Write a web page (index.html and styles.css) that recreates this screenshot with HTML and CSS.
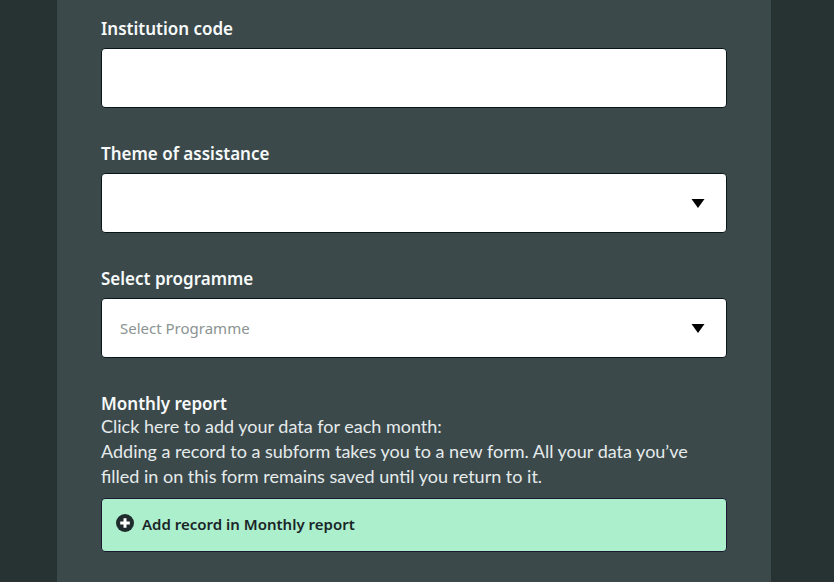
FILE: index.html
```html
<!DOCTYPE html>
<html lang="en">
<head>
  <meta charset="UTF-8">
  <meta name="viewport" content="width=device-width, initial-scale=1.0">
  <link rel="stylesheet" href="styles.css">
  <title>Monthly report</title>
</head>
<body class="page">
  <main class="panel">
    <form class="form">
      <div class="field">
        <label class="field__label" for="institution-code">Institution code</label>
        <input class="field__control" type="text" id="institution-code">
      </div>

      <div class="field">
        <label class="field__label" for="theme">Theme of assistance</label>
        <div class="select">
          <select class="field__control select__control" id="theme">
            <option value=""></option>
          </select>
          <svg class="select__arrow" viewBox="0 0 14 9" aria-hidden="true"><path d="M.5 0h13L7 9z"/></svg>
        </div>
      </div>

      <div class="field">
        <label class="field__label" for="programme">Select programme</label>
        <div class="select">
          <select class="field__control select__control" id="programme">
            <option value="">Select Programme</option>
          </select>
          <svg class="select__arrow" viewBox="0 0 14 9" aria-hidden="true"><path d="M.5 0h13L7 9z"/></svg>
        </div>
      </div>

      <section class="subform">
        <h2 class="subform__title">Monthly report</h2>
        <p class="subform__text">Click here to add your data for each month:</p>
        <p class="subform__text">Adding a record to a subform takes you to a new form. All your data you’ve filled in on this form remains saved until you return to it.</p>
        <button class="button" type="button">
          <svg class="button__icon" viewBox="0 0 18 18" aria-hidden="true">
            <circle cx="9" cy="9" r="9" fill="#1f2b2d"/>
            <path d="M9 4.2v9.6M4.2 9h9.6" stroke="#fff" stroke-width="3"/>
          </svg>
          Add record in Monthly report
        </button>
      </section>
    </form>
  </main>
</body>
</html>
```

FILE: styles.css
```css
* {
  box-sizing: border-box;
}

.page {
  margin: 0;
  background: #273332;
  color: #e6ebeb;
  font-family: "Noto Sans", "Open Sans", sans-serif;
  font-size: 17px;
}

.panel {
  min-height: 100vh;
  margin: 0 63px 0 57px;
  padding: 19px 44px 30px;
  background: #3b494b;
}

.form {
  display: flex;
  flex-direction: column;
  gap: 36px;
}

.field {
  display: flex;
  flex-direction: column;
  gap: 9px;
}

.field__label,
.subform__title {
  margin: 0;
  color: #f7fafa;
  font-size: 17px;
  font-weight: 600;
  line-height: 20px;
}

.field__control {
  display: block;
  width: 100%;
  height: 60px;
  padding: 0 18px;
  border: 1px solid #071719;
  border-radius: 4px;
  background: #fff;
  color: #8b9492;
  font-family: inherit;
  font-size: 15px;
}

.select {
  position: relative;
}

.select__control {
  appearance: none;
}

.select__arrow {
  position: absolute;
  top: 26px;
  right: 22px;
  width: 14px;
  height: 9px;
  pointer-events: none;
}

.subform__text {
  margin: 0;
  font-family: Lato, "Noto Sans", sans-serif;
  font-size: 18px;
  line-height: 25px;
}

.button {
  display: flex;
  align-items: center;
  gap: 8px;
  width: 100%;
  height: 54px;
  margin-top: 9px;
  padding: 0 15px 2px 14px;
  border: 1px solid #1b1730;
  border-radius: 4px;
  background: #abefcd;
  color: #1a2527;
  font-family: inherit;
  font-size: 15px;
  font-weight: 600;
}

.button__icon {
  width: 18px;
  height: 18px;
  margin-bottom: 3px;
}
```
